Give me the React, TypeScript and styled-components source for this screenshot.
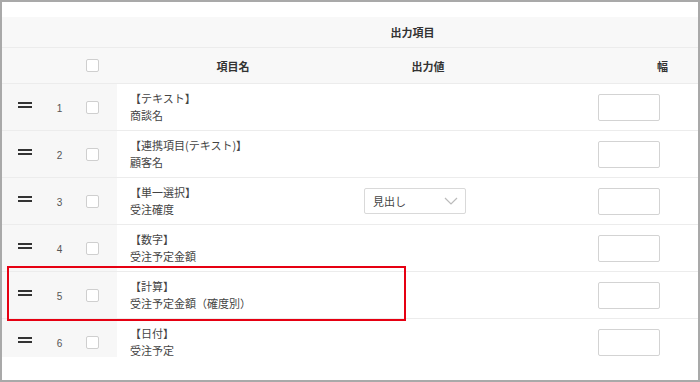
import React from 'react';
import styled, { createGlobalStyle } from 'styled-components';

const GlobalStyle = createGlobalStyle`
  body {
    margin: 0;
    background: #fff;
    font-family: "Noto Sans CJK JP", "Noto Sans", sans-serif;
    color: #333;
  }
`;

const Frame = styled.div`
  position: relative;
  width: 700px;
  height: 382px;
  box-sizing: border-box;
  border: 2px solid #a9a9a9;
  padding-top: 15px;
  background: #fff;
  overflow: hidden;
`;

const Grid = `
  display: grid;
  grid-template-columns: 45px 25px 45px 232px 158px 1fr;
  align-items: center;
  border-bottom: 1px solid #ececec;
`;

const GroupHeader = styled.div`
  display: flex;
  align-items: center;
  justify-content: center;
  height: 30px;
  padding-left: 125px;
  background: #f8f8f8;
  border-bottom: 1px solid #ececec;
  font-size: 11px;
  font-weight: bold;
`;

const HeaderRow = styled.div`
  ${Grid}
  height: 35px;
  background: #f8f8f8;
`;

const HeadCell = styled.div<{ $align?: string; $pr?: number }>`
  display: flex;
  justify-content: ${(p) => p.$align || 'center'};
  padding-right: ${(p) => p.$pr || 0}px;
  font-size: 11px;
  font-weight: bold;
`;

const Body = styled.div`
  height: 273px;
  overflow: hidden;
`;

const Row = styled.div`
  ${Grid}
  height: 46px;
  background: linear-gradient(to right, #f7f7f7 115px, #fff 115px);
`;

const HandleCell = styled.div`
  display: flex;
  justify-content: center;
`;

const Handle = styled.span`
  width: 14px;
  height: 2px;
  border-top: 2px solid #333;
  border-bottom: 2px solid #333;
  margin-top: -4px;
`;

const Num = styled.div`
  text-align: center;
  font-family: "Liberation Sans", sans-serif;
  font-size: 10px;
  color: #555;
  padding-top: 2px;
`;

const CheckCell = styled.div`
  display: flex;
  padding-left: 14px;
`;

const Check = styled.span`
  width: 13px;
  height: 13px;
  box-sizing: border-box;
  border: 1px solid #cfcfcf;
  border-radius: 2px;
  background: #fff;
`;

const Label = styled.div`
  padding-left: 13px;
  font-size: 11px;
  line-height: 17px;
  color: #444;
`;

const OutCell = styled.div`
  padding-left: 15px;
`;

const Select = styled.div`
  display: flex;
  align-items: center;
  justify-content: space-between;
  width: 102px;
  height: 26px;
  box-sizing: border-box;
  border: 1px solid #d9d9d9;
  border-radius: 2px;
  padding: 0 7px 0 8px;
  font-size: 11px;
  color: #444;
`;

const WidthCell = styled.div`
  display: flex;
  justify-content: flex-end;
  padding-right: 38px;
`;

const WidthInput = styled.div`
  width: 62px;
  height: 27px;
  box-sizing: border-box;
  border: 1px solid #d3d3d3;
  border-radius: 2px;
  background: #fff;
`;

const Highlight = styled.div`
  position: absolute;
  left: 5px;
  top: 264px;
  width: 399px;
  height: 55px;
  box-sizing: border-box;
  border: 2px solid #e60012;
  pointer-events: none;
`;

const rows = [
  { type: '【テキスト】', name: '商談名' },
  { type: '【連携項目(テキスト)】', name: '顧客名' },
  { type: '【単一選択】', name: '受注確度', select: '見出し' },
  { type: '【数字】', name: '受注予定金額' },
  { type: '【計算】', name: '受注予定金額（確度別）' },
  { type: '【日付】', name: '受注予定' },
];

const Chevron = () => (
  <svg width="14" height="8" viewBox="0 0 14 8">
    <path d="M1 1 L7 7 L13 1" fill="none" stroke="#bbb" strokeWidth="1.2" />
  </svg>
);

const App = () => (
  <>
    <GlobalStyle />
    <Frame>
      <GroupHeader>出力項目</GroupHeader>
      <HeaderRow>
        <div />
        <div />
        <CheckCell>
          <Check />
        </CheckCell>
        <HeadCell>項目名</HeadCell>
        <HeadCell>出力値</HeadCell>
        <HeadCell $align="flex-end" $pr={30}>
          幅
        </HeadCell>
      </HeaderRow>
      <Body>
        {rows.map((r, i) => (
          <Row key={i}>
            <HandleCell>
              <Handle />
            </HandleCell>
            <Num>{i + 1}</Num>
            <CheckCell>
              <Check />
            </CheckCell>
            <Label>
              {r.type}
              <br />
              {r.name}
            </Label>
            <OutCell>
              {r.select && (
                <Select>
                  {r.select}
                  <Chevron />
                </Select>
              )}
            </OutCell>
            <WidthCell>
              <WidthInput />
            </WidthCell>
          </Row>
        ))}
      </Body>
      <Highlight />
    </Frame>
  </>
);

export default App;
